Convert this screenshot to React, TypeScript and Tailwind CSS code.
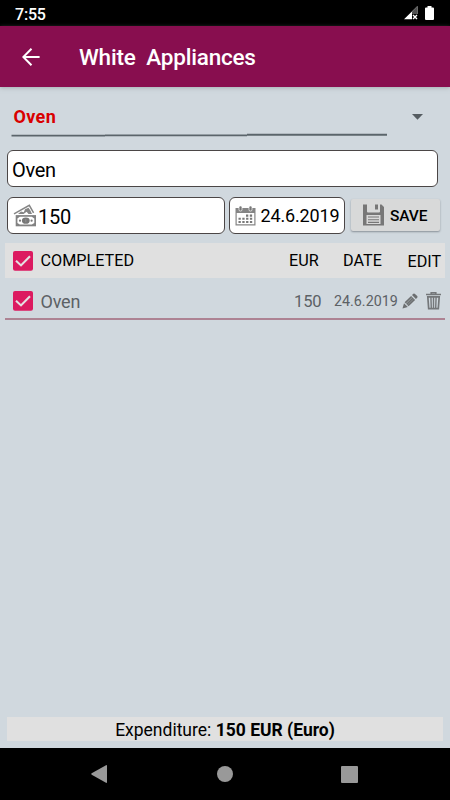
import React from 'react';

function Checkbox() {
  return (
    <svg className="h-5 w-5 shrink-0" viewBox="0 0 20 20">
      <rect width="20" height="19.7" rx="2" fill="#dc1a60" />
      <path d="M3 9.8 L8 14.4 L17 5.2" fill="none" stroke="#e4e0e2" strokeWidth="2.1" />
    </svg>
  );
}

function MoneyIcon() {
  return (
    <svg className="h-[23px] w-[24px] shrink-0" viewBox="0 0 24 23">
      <path d="M1 9.8 L16.3 1.3 L20.6 8.8" fill="none" stroke="#858585" strokeWidth="1.5" />
      <path d="M5 10 L8 7.4 L10.8 8.2 L12 5.2 L15.5 3.8 L17.5 6.8 L19 10 H15.5 L13.6 7.8 L10.6 9.9 Z" fill="#858585" />
      <rect x="2.7" y="11.1" width="20.3" height="11.2" fill="#828282" />
      <path d="M6.8 12.8 H18.8 L21.3 14.5 V18.9 L18.8 20.6 H6.8 L4.4 18.9 V14.5 Z" fill="#fff" />
      <ellipse cx="12.8" cy="16.7" rx="3.9" ry="3.1" fill="#777" />
      <path d="M12.8 15.2 V18.2" stroke="#a5a5a5" strokeWidth=".6" />
      <circle cx="7" cy="16.7" r="1.1" fill="#777" />
      <circle cx="18.6" cy="16.7" r="1.1" fill="#777" />
    </svg>
  );
}

function CalendarIcon() {
  return (
    <svg className="h-5 w-[21px] shrink-0" viewBox="0 0 21 20">
      <path d="M.5 2 H20.5 V19.5 H.5 Z M1.7 7 V18.3 H19.3 V7 Z" fill="#858585" fillRule="evenodd" />
      <rect x="4" y="0" width="3" height="5" rx="1.3" fill="#777" stroke="#fff" strokeWidth=".7" />
      <rect x="14" y="0" width="3" height="5" rx="1.3" fill="#777" stroke="#fff" strokeWidth=".7" />
      <path d="M11 9.6 H17.5 M3.5 12.8 H17.5 M3.5 16 H17.5" stroke="#777" strokeWidth="2.1" strokeDasharray="2.3 1.5" />
    </svg>
  );
}

function SaveIcon() {
  return (
    <svg className="h-[22px] w-[21px] shrink-0" viewBox="0 0 21 22">
      <path d="M0 .5 H4 V7.5 Q4 8.5 5 8.5 H16 Q17 8.5 17 7.5 V.5 H18.5 L21 3 V21.5 H0 Z" fill="#777" />
      <path d="M12 .5 H15 V5.5 H12 Z" fill="#777" />
      <rect x="3.5" y="11" width="14" height="9" fill="#d9d9d9" />
      <path d="M5 13 H16 M5 15.7 H16 M5 18.4 H16" stroke="#777" strokeWidth="1.1" />
    </svg>
  );
}

function PencilIcon() {
  return (
    <svg className="h-4 w-4 shrink-0" viewBox="0 0 16 16">
      <path d="M.5 15.5 L2 10.2 L5.8 14 Z" fill="#6c6f71" />
      <path d="M2.6 9.2 L9.1 2.9 L13.1 6.9 L6.6 13.3 Z" fill="#6c6f71" />
      <path d="M10 2 L11.3 .8 Q12.2 .1 13 .9 L15.2 3.1 Q15.9 3.9 15.2 4.7 L13.9 6 Z" fill="#6c6f71" />
      <path d="M4 10.6 L10.3 4.4" stroke="#c2c9cc" strokeWidth=".55" />
      <path d="M5.4 12 L11.7 5.8" stroke="#a6acaf" strokeWidth=".5" />
    </svg>
  );
}

function TrashIcon() {
  return (
    <svg className="block h-[18px] w-[15px] shrink-0" viewBox="0 0 15 18">
      <path d="M5.2 1.7 V.7 H9.8 V1.7 M0 2.5 H15" fill="none" stroke="#74777a" strokeWidth="1.6" />
      <path d="M1.8 4.8 H13.2 L12.3 16.7 H2.7 Z" fill="none" stroke="#74777a" strokeWidth="1.7" />
      <path d="M4.9 5 L5.3 16 M7.5 5 V16 M10.1 5 L9.7 16" stroke="#74777a" strokeWidth="1.4" />
    </svg>
  );
}

export default function App() {
  return (
    <div className="flex h-[800px] w-[450px] flex-col overflow-hidden bg-[#d0d8de] font-[Roboto,sans-serif] text-black">
      <header>
        <div className="flex h-[26px] items-center justify-between bg-black pl-[15px] pr-[16px] text-white">
          <span className="pt-[3px] text-[16px] font-medium leading-5 tracking-[-0.2px]">7:55</span>
          <div className="flex items-center gap-[7px]">
            <svg className="h-[14px] w-[14px]" viewBox="0 0 14 14">
              <path d="M0 13.3 L13.5 0 V8 H8 V13.3 Z" fill="#fff" />
              <path d="M8 5.5 L13.5 0 V8 H8 Z" fill="#505050" />
              <path d="M9 9 L13 13 M13 9 L9 13" stroke="#fff" strokeWidth="1.4" />
            </svg>
            <svg className="h-[14px] w-[9px]" viewBox="0 0 9 14">
              <path d="M2.5 0 H6.5 V1.5 H8 Q9 1.5 9 2.5 V13 Q9 14 8 14 H1 Q0 14 0 13 V2.5 Q0 1.5 1 1.5 H2.5 Z" fill="#fff" />
            </svg>
          </div>
        </div>
        <div className="flex h-[61px] items-center bg-[#880e4f] pl-[22px] text-white shadow-[0_1px_4px_#7b858a80]">
          <svg className="h-[18px] w-[18px]" viewBox="0 0 18 18">
            <path d="M17.6 9 H1.5 M9.5 .8 L1.3 9 L9.5 17.2" fill="none" stroke="#fff" strokeWidth="2" />
          </svg>
          <h1 className="ml-[39px] whitespace-pre pt-px text-[22.5px] font-medium leading-7 tracking-[-0.21px]">White  Appliances</h1>
        </div>
      </header>

      <main className="flex min-h-0 flex-1 flex-col">
        <div className="flex h-[63px] items-start justify-between pl-[11px] pr-[27px]">
          <div className="h-[50px] w-[376px]">
            <div className="h-[45px] pl-[2.5px] pt-[19px] text-[18px] font-bold leading-[22px] tracking-[0.35px] text-[#d90000]">Oven</div>
            <svg className="block h-[5px] w-[376px]" viewBox="0 0 376 5">
              <path d="M.5 2.7 H94 V2.4 H236 V1.8 H376 V3.8 H236 V4.2 H94 V4.6 H.5 Z" fill="#5b656b" />
            </svg>
          </div>
          <svg className="mt-[26.5px] h-[6px] w-[11px]" viewBox="0 0 11 6">
            <path d="M0 0 H11 L5.5 5.7 Z" fill="#555c61" />
          </svg>
        </div>

        <div className="ml-[7px] flex h-[37px] w-[431px] items-center rounded-[6px] border border-[#4b4646] bg-white pl-[4px] pt-[2px] text-[20px] tracking-[-0.3px]">Oven</div>

        <div className="mt-[10px] flex h-[37px] pl-[7px]">
          <div className="flex w-[218px] items-center rounded-[6px] border border-[#4b4646] bg-white pl-[5px] text-[20px]">
            <MoneyIcon />
            <span className="pl-[1px] pt-[2px] tracking-[-0.3px]">150</span>
          </div>
          <div className="ml-1 flex w-[116px] items-center rounded-[6px] border border-[#4b4646] bg-white pl-[5px] text-[18px]">
            <CalendarIcon />
            <span className="pl-[4.5px] tracking-[-0.15px]">24.6.2019</span>
          </div>
          <button className="ml-[6px] mt-[2px] flex h-[32px] w-[89px] items-center rounded-[2px] bg-[#d8d9d9] pl-[12px] text-[15.5px] font-medium shadow-[0_1px_2px_#889098]">
            <SaveIcon />
            <span className="pl-[6px] pt-[4px] tracking-[-0.1px]">SAVE</span>
          </button>
        </div>

        <div className="mx-[5px] mt-[9px] flex h-[35px] items-center bg-[#e0e0e0] pl-[8px] text-[16.2px]">
          <Checkbox />
          <span className="w-[256px] shrink-0 pl-[7.5px] pt-[2px]">COMPLETED</span>
          <span className="w-[54px] shrink-0 pt-[2px]">EUR</span>
          <span className="w-[64.5px] shrink-0 pt-[2px]">DATE</span>
          <span className="pt-[3px]">EDIT</span>
        </div>

        <div className="mx-[5px] flex h-[42px] items-center border-b-2 border-[#ad8393] pl-[8px] pt-[5px] text-[#5c6165]">
          <Checkbox />
          <span className="w-[261px] shrink-0 pl-[7.5px] pt-px text-[18px] tracking-[-0.2px]">Oven</span>
          <span className="w-[40px] shrink-0 pt-[4px] text-[16.5px] tracking-[-0.1px]">150</span>
          <span className="w-[68px] shrink-0 pt-[3px] text-[14.3px]">24.6.2019</span>
          <PencilIcon />
          <span className="ml-[8px]"><TrashIcon /></span>
        </div>

        <div className="mx-[7px] mt-auto mb-[7px] flex h-[24px] items-center justify-center bg-[#e0e0e0] pt-[2px] text-[17.5px]">
          <span className="whitespace-pre">Expenditure: <b className="font-bold">150 EUR (Euro)</b></span>
        </div>
      </main>

      <nav className="flex h-[52px] items-center bg-black pl-[91px]">
        <svg className="h-[18px] w-[16px]" viewBox="0 0 16 18">
          <path d="M.7 8.3 L15 .2 Q16 -.2 16 1 V17 Q16 18.2 15 17.8 L.7 9.7 Q-.2 9 .7 8.3 Z" fill="#999" />
        </svg>
        <span className="ml-[110px] h-[16px] w-[16px] rounded-full bg-[#999]" />
        <span className="ml-[107.5px] h-[17px] w-[17px] rounded-[1px] bg-[#999]" />
      </nav>
    </div>
  );
}
